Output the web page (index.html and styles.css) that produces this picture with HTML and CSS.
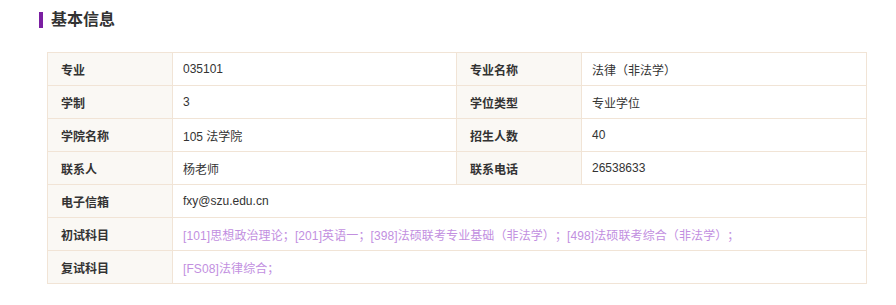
FILE: index.html
```html
<!DOCTYPE html>
<html lang="zh-CN">
<head>
<meta charset="utf-8">
<title>基本信息</title>
<link rel="stylesheet" href="styles.css">
</head>
<body>
<div class="section">
  <h2 class="title">基本信息</h2>
  <table class="info">
    <colgroup>
      <col class="c-label">
      <col class="c-value">
      <col class="c-label">
      <col class="c-value2">
    </colgroup>
    <tr>
      <td class="label">专业</td><td>035101</td>
      <td class="label">专业名称</td><td>法律（非法学）</td>
    </tr>
    <tr>
      <td class="label">学制</td><td>3</td>
      <td class="label">学位类型</td><td>专业学位</td>
    </tr>
    <tr>
      <td class="label">学院名称</td><td>105 法学院</td>
      <td class="label">招生人数</td><td>40</td>
    </tr>
    <tr>
      <td class="label">联系人</td><td>杨老师</td>
      <td class="label">联系电话</td><td>26538633</td>
    </tr>
    <tr>
      <td class="label">电子信箱</td><td colspan="3">fxy@szu.edu.cn</td>
    </tr>
    <tr>
      <td class="label">初试科目</td><td colspan="3" class="subj">[101]思想政治理论；[201]英语一；[398]法硕联考专业基础（非法学）；[498]法硕联考综合（非法学）；</td>
    </tr>
    <tr>
      <td class="label">复试科目</td><td colspan="3" class="subj">[FS08]法律综合；</td>
    </tr>
  </table>
</div>
</body>
</html>
```
FILE: styles.css
```css
html, body {
  margin: 0;
  padding: 0;
  background: #ffffff;
}

body {
  font-family: "Liberation Sans", "Noto Sans CJK SC", sans-serif;
  color: #333333;
  text-spacing-trim: space-all;
}

.section {
  padding: 10px 0 0 39px;
}

.title {
  display: flex;
  align-items: center;
  gap: 8px;
  margin: 0;
  height: 20px;
  font-size: 16px;
  line-height: 20px;
  font-weight: bold;
  color: #333333;
}

.title::before {
  content: "";
  display: block;
  width: 4px;
  height: 16px;
  background: #7b1fa2;
}

.info {
  margin: 22px 0 0 8px;
  width: 819px;
  table-layout: fixed;
  border-collapse: collapse;
  font-size: 12px;
}

.c-label { width: 125px; }
.c-value { width: 284px; }
.c-value2 { width: 285px; }

.info td {
  height: 32px;
  padding: 0 10px;
  border: 1px solid #f1e4d6;
  vertical-align: middle;
  white-space: nowrap;
}

.info td.label {
  padding-left: 13px;
  background: #faf8f4;
  font-weight: bold;
  color: #333333;
}

.info td.subj {
  color: #c28fdf;
  letter-spacing: 0.1px;
}
```
